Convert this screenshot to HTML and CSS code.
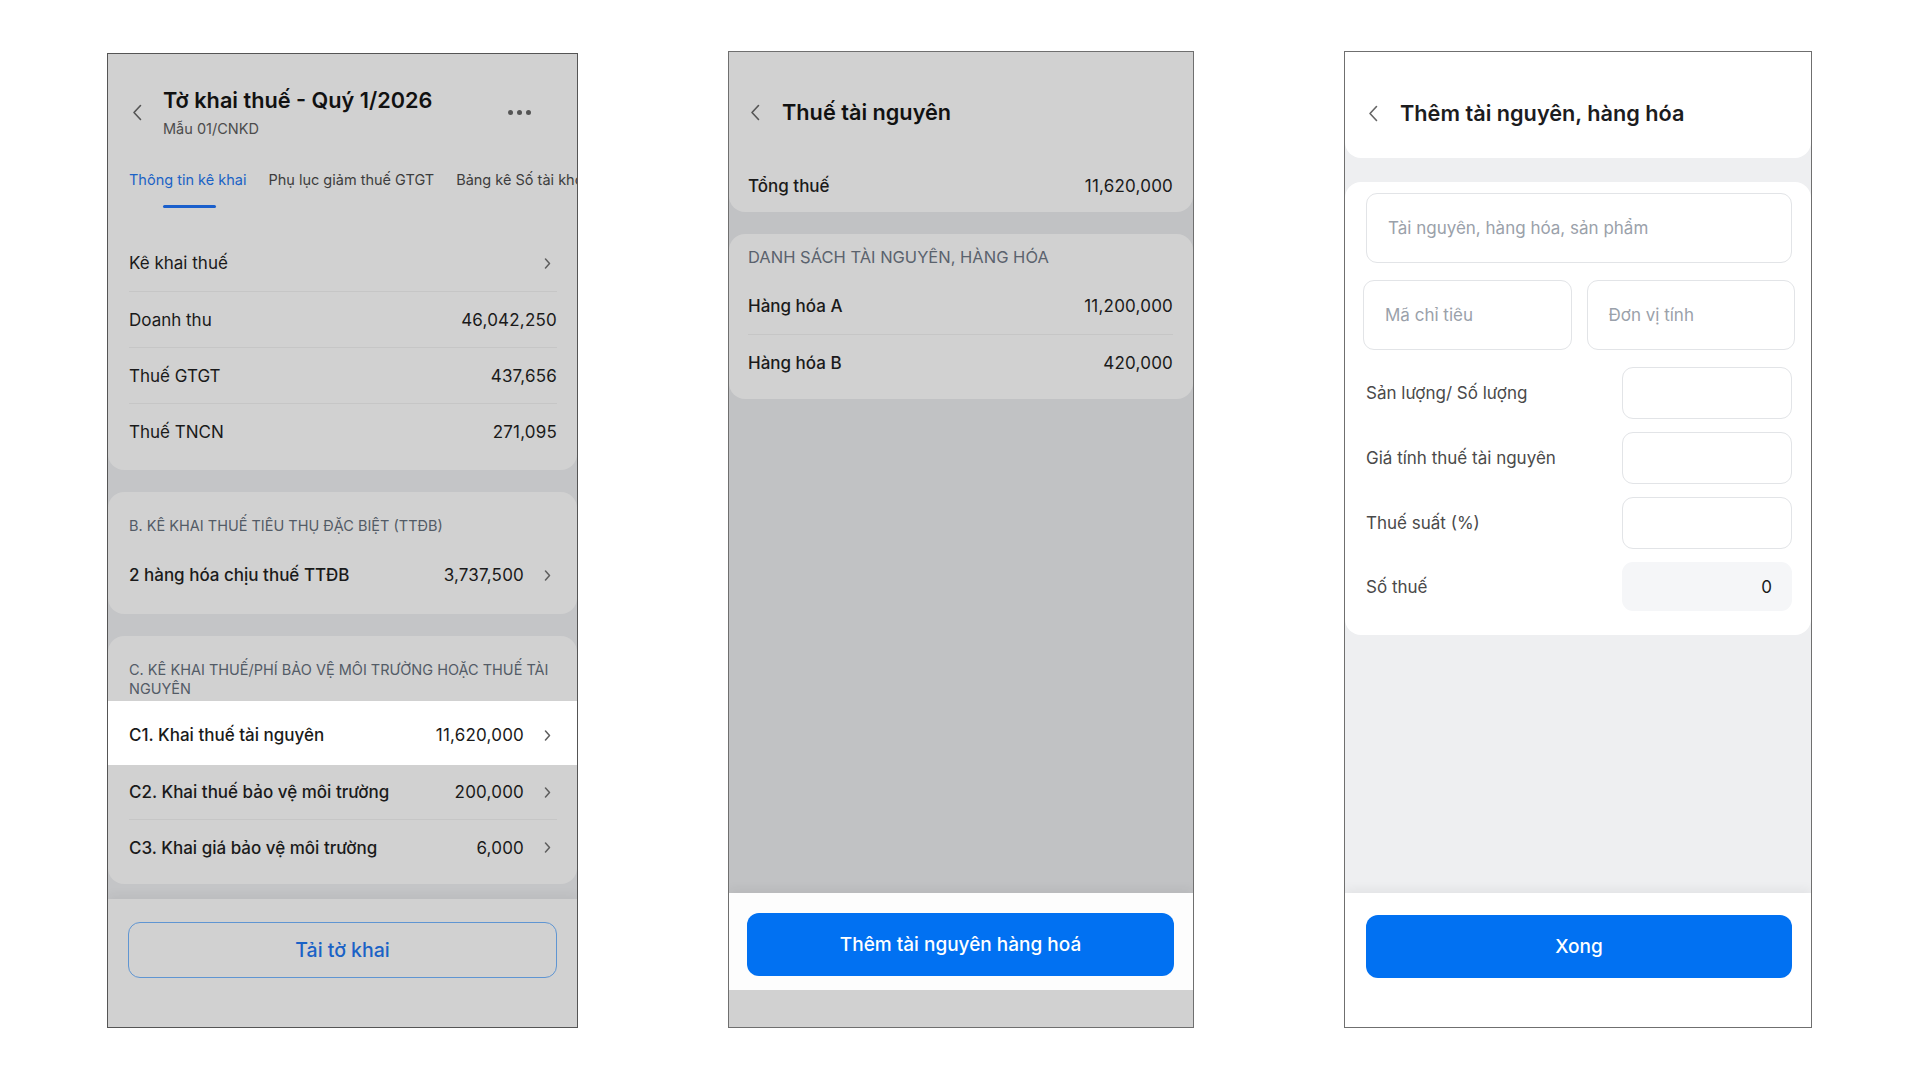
FILE: index.html
```html
<!DOCTYPE html>
<html lang="vi">
<head>
  <meta charset="UTF-8">
  <meta name="viewport" content="width=device-width, initial-scale=1.0">
  <title>Tờ khai thuế - Thuế tài nguyên</title>
  <link rel="stylesheet" href="styles.css">
</head>
<body>

  <div class="screens">

    <!-- Screen 1: tax declaration overview (dimmed, C1 row pressed) -->
    <div class="phone phone-one dim">
      <div class="header">
        <div class="nav">
          <svg class="back" viewBox="0 0 10 17"><path d="M8.5 1.5 L2 8.5 L8.5 15.5"/></svg>
          <div class="nav-title">
            <div class="title">Tờ khai thuế - Quý 1/2026</div>
            <div class="subtitle">Mẫu 01/CNKD</div>
          </div>
          <div class="dots"><span></span><span></span><span></span></div>
        </div>
        <div class="tabs">
          <div class="tab active">Thông tin kê khai<i class="tab-bar"></i></div>
          <div class="tab">Phụ lục giảm thuế GTGT</div>
          <div class="tab">Bảng kê Số tài khoản</div>
        </div>
      </div>

      <div class="card card-a">
        <div class="row">
          <span class="label">Kê khai thuế</span>
          <svg class="chev" viewBox="0 0 7 11"><path d="M1.5 1 L5.5 5.5 L1.5 10"/></svg>
        </div>
        <div class="row sep"><span class="label">Doanh thu</span><span class="value">46,042,250</span></div>
        <div class="row sep"><span class="label">Thuế GTGT</span><span class="value">437,656</span></div>
        <div class="row sep"><span class="label">Thuế TNCN</span><span class="value">271,095</span></div>
      </div>

      <div class="card card-b">
        <div class="sec-title">B. KÊ KHAI THUẾ TIÊU THỤ ĐẶC BIỆT (TTĐB)</div>
        <div class="row strong">
          <span class="label">2 hàng hóa chịu thuế TTĐB</span><span class="value">3,737,500</span>
          <svg class="chev" viewBox="0 0 7 11"><path d="M1.5 1 L5.5 5.5 L1.5 10"/></svg>
        </div>
      </div>

      <div class="card card-c">
        <div class="sec-title">C. KÊ KHAI THUẾ/PHÍ BẢO VỆ MÔI TRƯỜNG HOẶC THUẾ TÀI<br>NGUYÊN</div>
        <div class="row strong pressed">
          <span class="label">C1. Khai thuế tài nguyên</span><span class="value">11,620,000</span>
          <svg class="chev" viewBox="0 0 7 11"><path d="M1.5 1 L5.5 5.5 L1.5 10"/></svg>
        </div>
        <div class="row strong short">
          <span class="label">C2. Khai thuế bảo vệ môi trường</span><span class="value">200,000</span>
          <svg class="chev" viewBox="0 0 7 11"><path d="M1.5 1 L5.5 5.5 L1.5 10"/></svg>
        </div>
        <div class="row strong sep">
          <span class="label">C3. Khai giá bảo vệ môi trường</span><span class="value">6,000</span>
          <svg class="chev" viewBox="0 0 7 11"><path d="M1.5 1 L5.5 5.5 L1.5 10"/></svg>
        </div>
      </div>

      <div class="footer footer-one">
        <button class="btn-outline">Tải tờ khai</button>
      </div>
    </div>

    <!-- Screen 2: resource tax list (dimmed) -->
    <div class="phone phone-two dim">
      <div class="header header-two">
        <div class="nav">
          <svg class="back" viewBox="0 0 10 17"><path d="M8.5 1.5 L2 8.5 L8.5 15.5"/></svg>
          <div class="title">Thuế tài nguyên</div>
        </div>
        <div class="row total"><span class="label">Tổng thuế</span><span class="value">11,620,000</span></div>
      </div>

      <div class="card card-list">
        <div class="sec-title">DANH SÁCH TÀI NGUYÊN, HÀNG HÓA</div>
        <div class="row strong"><span class="label">Hàng hóa A</span><span class="value">11,200,000</span></div>
        <div class="row strong sep"><span class="label">Hàng hóa B</span><span class="value">420,000</span></div>
      </div>

      <div class="spacer"></div>

      <div class="footer footer-two">
        <button class="btn-primary">Thêm tài nguyên hàng hoá</button>
      </div>
      <div class="home-bar"></div>
    </div>

    <!-- Screen 3: add resource form -->
    <div class="phone phone-three">
      <div class="header header-three">
        <div class="nav">
          <svg class="back" viewBox="0 0 10 17"><path d="M8.5 1.5 L2 8.5 L8.5 15.5"/></svg>
          <div class="title">Thêm tài nguyên, hàng hóa</div>
        </div>
      </div>

      <div class="card form">
        <div class="field wide">Tài nguyên, hàng hóa, sản phẩm</div>
        <div class="field-pair">
          <div class="field">Mã chỉ tiêu</div>
          <div class="field">Đơn vị tính</div>
        </div>
        <div class="form-row">
          <span class="form-label">Sản lượng/ Số lượng</span>
          <div class="box"></div>
        </div>
        <div class="form-row">
          <span class="form-label">Giá tính thuế tài nguyên</span>
          <div class="box"></div>
        </div>
        <div class="form-row">
          <span class="form-label">Thuế suất (%)</span>
          <div class="box"></div>
        </div>
        <div class="form-row">
          <span class="form-label">Số thuế</span>
          <div class="box readonly">0</div>
        </div>
      </div>

      <div class="spacer"></div>

      <div class="footer footer-three">
        <button class="btn-primary">Xong</button>
      </div>
    </div>

  </div>

</body>
</html>
```

FILE: styles.css
```css
* {
  box-sizing: border-box;
}
body {
  margin: 0;
  background-color: #fff;
  font-family: Inter, "Noto Sans", sans-serif;
  color: #1a1a1a;
}
.screens {
  display: flex;
  align-items: flex-start;
  gap: 150px;
  padding: 51px 0 0 107px;
}

/* phone frames */
.phone {
  display: flex;
  flex-direction: column;
  height: 977px;
  border: 1px solid #6f6f6f;
  overflow: hidden;
}
.phone-one {
  width: 471px;
  height: 975px;
  margin-top: 2px;
  background-color: #c4c5c7;
  border-color: #555;
}
.phone-two {
  width: 466px;
  background-color: #c1c2c4;
}
.phone-three {
  width: 468px;
  background-color: #eeeff1;
}
.spacer {
  flex: 1;
}

/* header */
.header {
  flex-shrink: 0;
  border-radius: 0 0 16px 16px;
}
.dim .header,
.dim .card {
  background-color: #d1d1d1;
}
.nav {
  display: flex;
  align-items: center;
}
.back {
  width: 10px;
  height: 17px;
  flex-shrink: 0;
  fill: none;
  stroke: #555;
  stroke-width: 1.6;
  stroke-linecap: round;
  stroke-linejoin: round;
}
.title {
  font-size: 21.7px;
  font-weight: 600;
  line-height: 28px;
  color: #111;
}
.subtitle {
  margin-top: 6px;
  font-size: 14.5px;
  line-height: 18px;
  color: #4c4c4c;
}

.phone-one .header {
  padding: 32px 46px 4px 0;
  border-radius: 0;
}
.phone-one .nav {
  padding-left: 24px;
}
.nav-title {
  flex: 1;
  margin-left: 21px;
}
.dots {
  display: flex;
  gap: 4px;
}
.dots span {
  width: 5px;
  height: 5px;
  border-radius: 50%;
  background-color: #555;
}
.tabs {
  display: flex;
  gap: 22px;
  margin-top: 32px;
  padding-left: 21px;
  margin-right: -46px;
  white-space: nowrap;
  overflow: hidden;
}
.tab {
  display: flex;
  flex-direction: column;
  font-size: 14.5px;
  line-height: 20px;
  color: #3d3d3d;
  padding-bottom: 3px;
}
.tab.active {
  color: #1b63c6;
  padding-bottom: 0;
}
.tab-bar {
  display: block;
  align-self: center;
  width: 53px;
  height: 3px;
  margin: 15px 0 0 4px;
  border-radius: 2px;
  background-color: #1a5fcc;
}

/* cards and rows */
.card {
  flex-shrink: 0;
  border-radius: 16px;
}
.row {
  display: flex;
  align-items: center;
  height: 56px;
  margin: 0 20px 0 21px;
  font-size: 17px;
  color: #1a1a1a;
}
.row.sep {
  border-top: 1px solid #c6c6c6;
}
.row.short {
  height: 54px;
}
.row.strong .label {
  font-weight: 500;
}
.label {
  flex: 1;
}
.value {
  font-size: 17px;
  letter-spacing: 0.2px;
}
.chev {
  width: 7px;
  height: 11px;
  margin-left: 20px;
  margin-right: 6px;
  fill: none;
  stroke: #5d5d5d;
  stroke-width: 1.5;
  stroke-linecap: round;
  stroke-linejoin: round;
}
.sec-title {
  padding: 0 20px 0 21px;
  font-size: 14.5px;
  line-height: 19px;
  color: #535b66;
}

.card-a {
  padding: 23px 0 11px;
  border-radius: 0 0 16px 16px;
}
.card-b {
  margin-top: 22px;
  padding: 24px 0 11px;
}
.card-b .sec-title {
  margin-bottom: 12px;
}
.card-c {
  margin-top: 22px;
  padding: 24px 0 9px;
}
.card-c .sec-title {
  margin-bottom: 3px;
  white-space: nowrap;
}
.row.pressed {
  height: 64px;
  margin: 0;
  padding: 4px 20px 0 21px;
  background-color: #fff;
}

/* footer with buttons */
.footer {
  flex-shrink: 0;
  box-shadow: 0 -4px 10px rgba(0, 0, 0, 0.05);
}
.footer-one {
  flex: 1;
  margin-top: 15px;
  padding: 23px 20px 0 20px;
  background-color: #d1d1d1;
}
.btn-outline {
  display: block;
  width: 100%;
  height: 56px;
  border: 1.5px solid #5f95d2;
  border-radius: 12px;
  background: transparent;
  font-family: inherit;
  font-size: 19.5px;
  font-weight: 500;
  color: #1a62c6;
}
.btn-primary {
  display: block;
  width: 100%;
  height: 63px;
  border: none;
  border-radius: 12px;
  background-color: #0171f2;
  font-family: inherit;
  font-size: 19px;
  font-weight: 500;
  color: #fff;
}

/* screen 2 */
.header-two {
  padding: 46px 20px 16px 21px;
}
.header-two .title {
  margin-left: 22px;
}
.row.total {
  height: 20px;
  margin: 50px 0 0 -2px;
}
.row.total .label {
  font-weight: 500;
}
.card-list {
  margin-top: 22px;
  padding: 13px 0 9px;
}
.card-list .sec-title {
  padding-left: 19px;
  margin-bottom: 11px;
  font-size: 16.5px;
  line-height: 20px;
  color: #5a626d;
}
.card-list .row {
  margin-left: 19px;
}
.footer-two {
  height: 97px;
  padding: 20px 19px 0 18px;
  background-color: #fdfdfd;
}
.home-bar {
  height: 37px;
  flex-shrink: 0;
  background-color: #d1d1d1;
}

/* screen 3 */
.phone-three .header,
.phone-three .card {
  background-color: #fff;
}
.header-three {
  padding: 47px 20px 31px 23px;
}
.header-three .back {
  stroke: #666;
}
.header-three .title {
  margin-left: 22px;
  color: #1c1c1e;
}
.form {
  margin-top: 24px;
  padding: 11px 19px 24px 21px;
}
.field {
  display: flex;
  align-items: center;
  height: 70px;
  padding-left: 21px;
  border: 1.5px solid #e2e4e7;
  border-radius: 11px;
  font-size: 17px;
  color: #9aa1aa;
}
.field-pair {
  display: grid;
  grid-template-columns: 1fr 1fr;
  gap: 15px;
  margin: 17px -3px 0 -3px;
}
.form-row {
  display: flex;
  align-items: center;
  margin-top: 13px;
}
.field-pair + .form-row {
  margin-top: 17px;
}
.form-label {
  flex: 1;
  font-size: 17px;
  color: #4a4a4a;
}
.box {
  width: 170px;
  height: 52px;
  border: 1.5px solid #e2e4e7;
  border-radius: 11px;
}
.box.readonly {
  display: flex;
  align-items: center;
  justify-content: flex-end;
  height: 49px;
  padding-right: 20px;
  border: none;
  background-color: #f5f6f8;
  font-size: 17px;
  color: #1a1a1a;
}
.footer-three {
  flex: none;
  height: 134px;
  padding: 22px 19px 0 21px;
  background-color: #fff;
}
```
